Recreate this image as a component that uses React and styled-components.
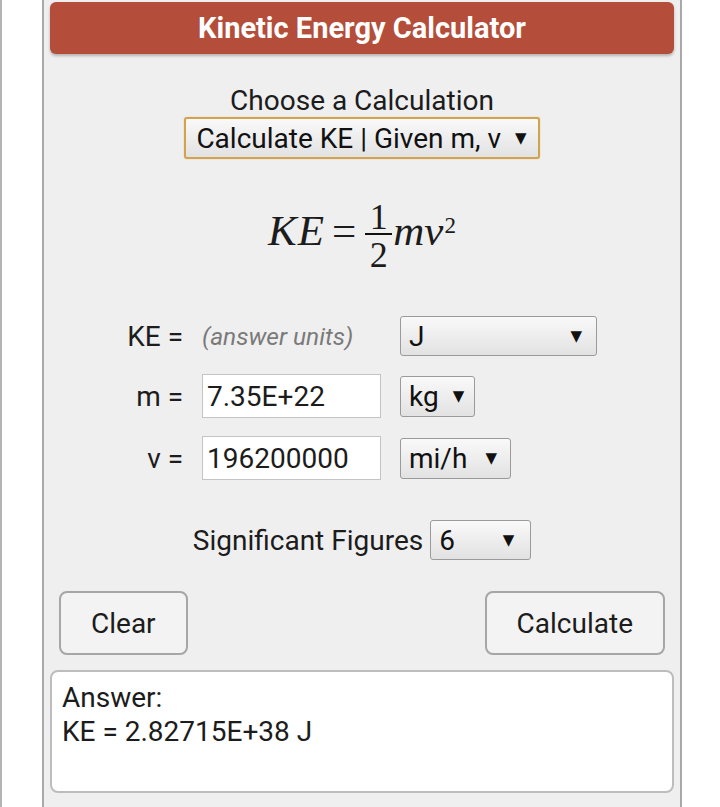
import styled, { createGlobalStyle } from 'styled-components';

const GlobalStyle = createGlobalStyle`
  body {
    margin: 0;
    background: #ffffff;
    font-family: Roboto, "Noto Sans", sans-serif;
    color: #1c1c1c;
  }
`

const Page = styled.div`
  min-height: 807px;
  border-left: 2px solid #b4b4b4;
  box-sizing: border-box;
`
const Panel = styled.div`
  margin-left: 40px;
  width: 640px;
  min-height: 807px;
  box-sizing: border-box;
  padding: 2px 6px 0;
  background: #efefef;
  border-left: 2px solid #a9a9a9;
  border-right: 2px solid #a9a9a9;
`
const Header = styled.div`
  height: 52px;
  display: flex;
  align-items: center;
  justify-content: center;
  background: #b44d3a;
  border-radius: 6px;
  box-shadow: 0 2px 3px rgba(0, 0, 0, 0.25);
  color: #ffffff;
  font-size: 29px;
  font-weight: 700;
`
const Chooser = styled.div`
  margin-top: 30px;
  display: flex;
  flex-direction: column;
  align-items: center;
  font-size: 28px;
  line-height: 33px;
`
const SelectBox = styled.div`
  box-sizing: border-box;
  display: inline-flex;
  align-items: center;
  justify-content: space-between;
  width: ${p => p.$w ? p.$w + 'px' : 'auto'};
  height: ${p => p.$h || 41}px;
  padding: 0 ${p => p.$pr || 13}px 0 ${p => p.$pl || 8}px;
  gap: 14px;
  font-size: 28px;
  color: #111;
  background: linear-gradient(#f9f9f9, #e2e2e2);
  border: ${p => p.$focus ? '2px solid #d2a24c' : '1px solid #9a9a9a'};
  border-radius: 3px;
  box-shadow: ${p => p.$focus ? '0 0 1px #d2a24c' : 'none'};
`
const Caret = styled.span`
  font-family: "DejaVu Sans", sans-serif;
  font-size: 15px;
  color: #111;
`
const Formula = styled.div`
  margin-top: 30px;
  height: 82px;
  display: flex;
  align-items: center;
  justify-content: center;
  font-family: "Liberation Serif", "DejaVu Serif", serif;
  font-size: 43px;
  line-height: 1;
`
const MathVar = styled.span`
  font-style: italic;
  letter-spacing: ${p => p.$ls || 0}px;
`
const MathOp = styled.span`
  margin: 0 9px 0 7px;
`
const Frac = styled.span`
  display: inline-flex;
  flex-direction: column;
  align-items: center;
  margin: 12px 1px 0 0;
  font-size: 36px;
  line-height: 32px;
`
const FracBar = styled.span`
  width: 27px;
  height: 1.5px;
  background: #111;
`
const Denom = styled.span`
  padding-top: 4px;
`
const Sup = styled.sup`
  font-style: normal;
  font-size: 23px;
  vertical-align: 12px;
  line-height: 0;
  margin-left: 1px;
`
const Rows = styled.div`
  margin-top: 45px;
  padding-left: 43px;
  display: grid;
  grid-template-columns: 90px 179px auto;
  column-gap: 19px;
  row-gap: 18px;
  align-items: center;
  justify-items: start;
  font-size: 28px;
`
const Label = styled.span`
  justify-self: end;
`
const Hint = styled.span`
  font-style: italic;
  color: #7a7a7a;
  font-size: 24.5px;
`
const Input = styled.div`
  box-sizing: border-box;
  width: 179px;
  height: 44px;
  display: flex;
  align-items: center;
  padding-left: 4px;
  background: #ffffff;
  border: 1px solid #c4c4c4;
  font-size: 28px;
`
const SigRow = styled.div`
  margin-top: 40px;
  display: flex;
  align-items: center;
  justify-content: center;
  gap: 7px;
  font-size: 28px;
`
const Buttons = styled.div`
  margin-top: 31px;
  padding: 0 9px;
  display: flex;
  justify-content: space-between;
`
const Button = styled.button`
  height: 64px;
  padding: 0 ${p => p.$px || 30}px;
  font-family: Roboto, sans-serif;
  font-size: 28px;
  color: #1c1c1c;
  background: #f3f3f3;
  border: 2px solid #a6a6a6;
  border-radius: 8px;
`
const Answer = styled.div`
  margin-top: 15px;
  height: 123px;
  box-sizing: border-box;
  padding: 9px 10px;
  background: #ffffff;
  border: 2px solid #bdbdbd;
  border-radius: 8px;
  font-size: 28px;
  line-height: 34px;
`

export default function App() {
    return (
        <Page>
            <GlobalStyle />
            <Panel>
                <Header>Kinetic Energy Calculator</Header>
                <Chooser>
                    <span>Choose a Calculation</span>
                    <SelectBox $focus $h={42} $pl={10} $pr={11}>
                        Calculate KE | Given m, v <Caret>▼</Caret>
                    </SelectBox>
                </Chooser>
                <Formula>
                    <MathVar $ls={1}>KE</MathVar>
                    <MathOp>=</MathOp>
                    <Frac>
                        <span>1</span>
                        <FracBar />
                        <Denom>2</Denom>
                    </Frac>
                    <MathVar>mv<Sup>2</Sup></MathVar>
                </Formula>
                <Rows>
                    <Label>KE =</Label>
                    <Hint>(answer units)</Hint>
                    <SelectBox $w={197} $h={40} $pr={14}>J <Caret>▼</Caret></SelectBox>

                    <Label>m =</Label>
                    <Input>7.35E+22</Input>
                    <SelectBox $w={75} $pr={11}>kg <Caret>▼</Caret></SelectBox>

                    <Label>v =</Label>
                    <Input>196200000</Input>
                    <SelectBox $w={111} $pr={13}>mi/h <Caret>▼</Caret></SelectBox>
                </Rows>
                <SigRow>
                    <span>Significant Figures</span>
                    <SelectBox $w={101} $h={40} $pr={16}>6 <Caret>▼</Caret></SelectBox>
                </SigRow>
                <Buttons>
                    <Button>Clear</Button>
                    <Button $px={30}>Calculate</Button>
                </Buttons>
                <Answer>
                    Answer:<br />
                    KE = 2.82715E+38 J
                </Answer>
            </Panel>
        </Page>
    )
}
